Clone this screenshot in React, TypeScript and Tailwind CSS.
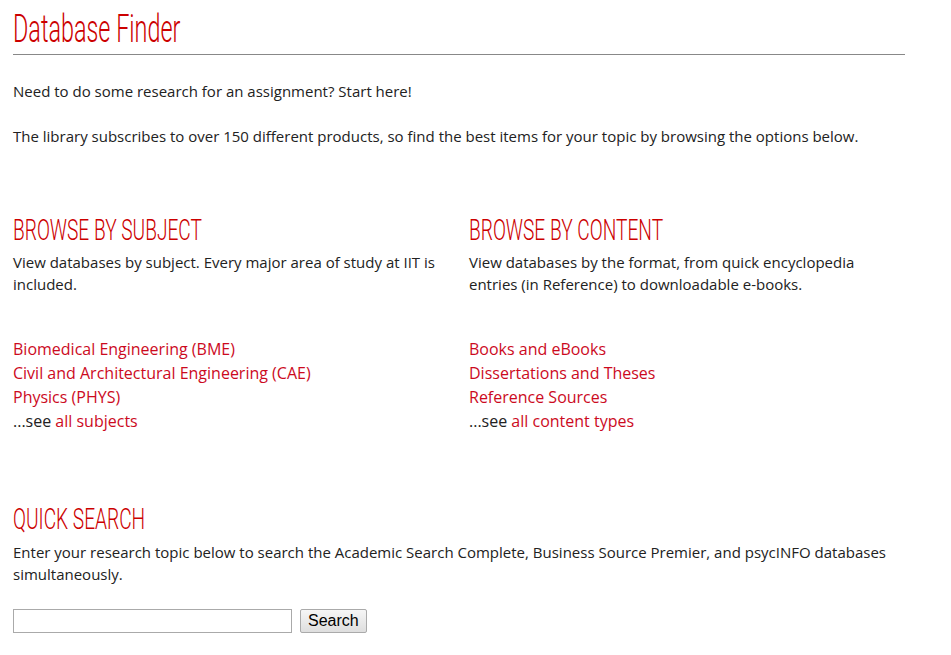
import { useState } from "react"

const heading = "font-['Roboto',sans-serif] font-light text-[#cc0000]"

const subjects = ["Biomedical Engineering (BME)", "Civil and Architectural Engineering (CAE)", "Physics (PHYS)"]
const contentTypes = ["Books and eBooks", "Dissertations and Theses", "Reference Sources"]

function SectionTitle({ children, className = "" }: { children: string; className?: string }) {
  return (
    <h2 className={`${heading} uppercase text-[29px] leading-[32px] whitespace-nowrap ${className}`}>
      <span className="inline-block origin-left scale-x-[0.66]">{children}</span>
    </h2>
  )
}

function BrowseColumn({ title, text, links, more, className = "" }: { title: string; text: string; links: string[]; more: string; className?: string }) {
  return (
    <div className={className}>
      <SectionTitle className="mb-[5px]">{title}</SectionTitle>
      <p className="leading-[22px] pr-4">{text}</p>
      <ul className="mt-[42px] text-[16px] leading-[24px]">
        {links.map((l) => (
          <li key={l}>
            <a href="#" className="text-[#cc0a1e]">{l}</a>
          </li>
        ))}
        <li>
          ...see <a href="#" className="text-[#cc0a1e]">{more}</a>
        </li>
      </ul>
    </div>
  )
}

export default function App() {
  const [query, setQuery] = useState("")

  return (
    <div className="min-h-screen bg-white font-['Open_Sans',sans-serif] text-[15px] text-[#222]">
      <div className="w-[892px] ml-[13px] pt-[8px]">
        <h1 className={`${heading} text-[39px] leading-[42px] pb-[4px] border-b border-[#888] whitespace-nowrap`}>
          <span className="inline-block origin-left scale-x-[0.6]">Database Finder</span>
        </h1>

        <p className="mt-[25px] leading-[22px]">Need to do some research for an assignment? Start here!</p>
        <p className="mt-[23px] leading-[22px]">
          The library subscribes to over 150 different products, so find the best items for your topic by browsing the options below.
        </p>

        {/* Browse columns */}
        <div className="flex mt-[67px]">
          <BrowseColumn
            className="w-[456px] shrink-0"
            title="Browse by Subject"
            text="View databases by subject. Every major area of study at IIT is included."
            links={subjects}
            more="all subjects"
          />
          <BrowseColumn
            className="flex-1"
            title="Browse by Content"
            text="View databases by the format, from quick encyclopedia entries (in Reference) to downloadable e-books."
            links={contentTypes}
            more="all content types"
          />
        </div>

        {/* Quick search */}
        <SectionTitle className="mt-[70px] mb-[6px]">Quick Search</SectionTitle>
        <p className="leading-[22px]">
          Enter your research topic below to search the Academic Search Complete, Business Source Premier, and psycINFO databases simultaneously.
        </p>
        <form className="flex items-center gap-[8px] mt-[24px]" onSubmit={(e) => e.preventDefault()}>
          <input
            value={query}
            onChange={(e) => setQuery(e.target.value)}
            className="w-[279px] h-[24px] border border-[#aaa] bg-white px-1 text-[13px]"
          />
          <button className="h-[24px] px-[7px] border border-[#aaa] rounded-[2px] bg-gradient-to-b from-[#f6f6f6] to-[#dedede] font-['Liberation_Sans',sans-serif] text-[16px] text-black leading-none">
            Search
          </button>
        </form>
      </div>
    </div>
  )
}
